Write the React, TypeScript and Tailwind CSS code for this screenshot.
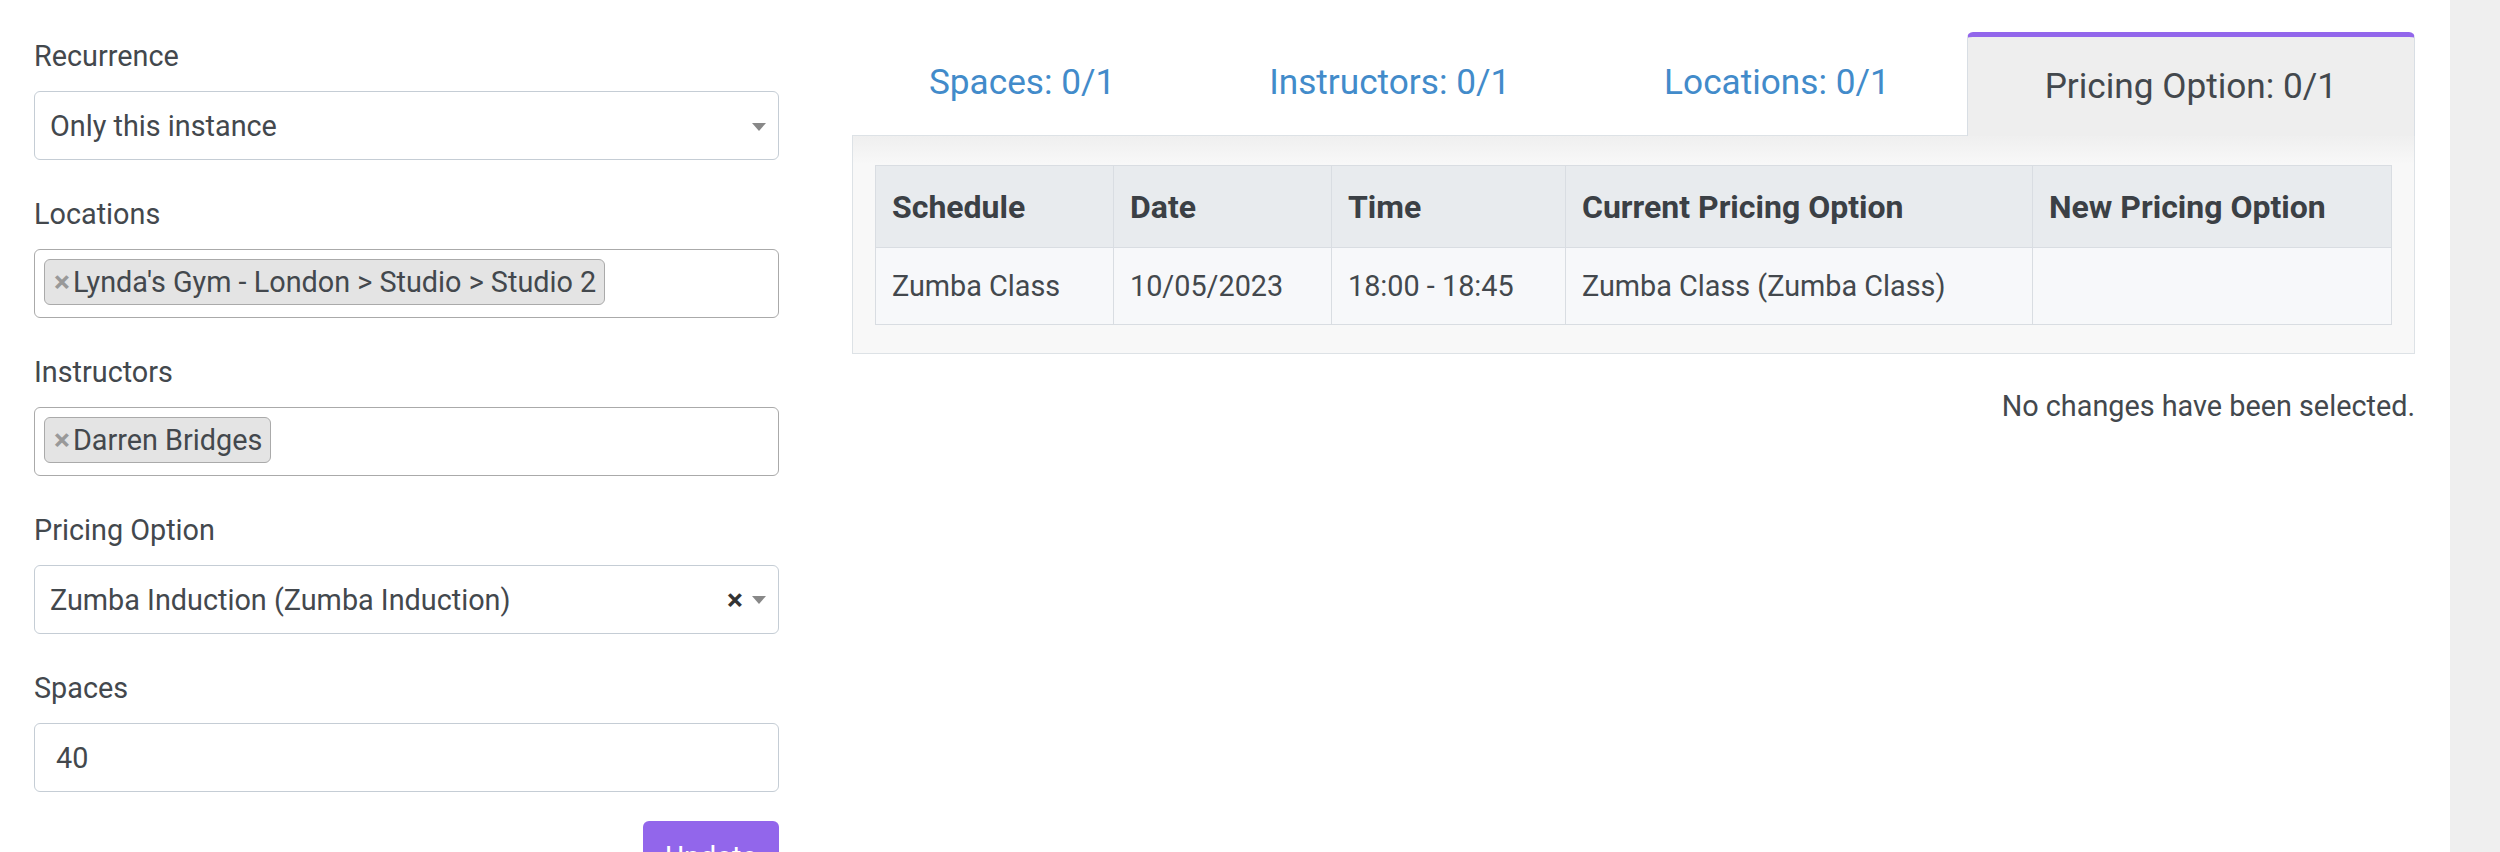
import React from "react";

const Arrow = () => (
  <span className="inline-block w-0 h-0 border-l-[7px] border-r-[7px] border-t-[8px] border-l-transparent border-r-transparent border-t-[#888888]" />
);

function Label({ children }: { children: React.ReactNode }) {
  return <div className="h-[38px] pt-[2px] leading-[38px] text-[28.8px] text-[#43484d]">{children}</div>;
}

function Tag({ children }: { children: React.ReactNode }) {
  return (
    <div className="h-[46px] flex items-center rounded-[6px] border border-[#aaaaaa] bg-[#e4e4e4] pl-[9px] pr-[8px] text-[28.8px] text-[#43484d]">
      <span className="text-[#999999] font-bold text-[30px] mr-[3px] leading-none">×</span>
      <span className="whitespace-nowrap pt-[2px]">{children}</span>
    </div>
  );
}

export default function App() {
  const tabs = ["Spaces: 0/1", "Instructors: 0/1", "Locations: 0/1"];
  const cols = ["Schedule", "Date", "Time", "Current Pricing Option", "New Pricing Option"];
  const row = ["Zumba Class", "10/05/2023", "18:00 - 18:45", "Zumba Class (Zumba Class)", ""];
  return (
    <div className="w-[2500px] h-[852px] overflow-hidden bg-white flex font-['Roboto',sans-serif] text-[#43484d]">
      {/* Left form */}
      <div className="w-[780px] shrink-0 pl-[34px] pr-[1px] pt-[35px] flex flex-col gap-[33px]">
        <div>
          <Label>Recurrence</Label>
          <div className="mt-[18px] h-[69px] rounded-[6px] border border-[#c5cdd5] flex items-center pl-[15px] pr-[12px] pt-[3px] text-[28.8px]">
            <span>Only this instance</span>
            <span className="ml-auto flex items-center"><Arrow /></span>
          </div>
        </div>
        <div>
          <Label>Locations</Label>
          <div className="mt-[18px] h-[69px] rounded-[6px] border border-[#aaaaaa] pt-[9px] pl-[9px] flex items-start">
            <Tag>Lynda's Gym - London &gt; Studio &gt; Studio 2</Tag>
          </div>
        </div>
        <div>
          <Label>Instructors</Label>
          <div className="mt-[18px] h-[69px] rounded-[6px] border border-[#aaaaaa] pt-[9px] pl-[9px] flex items-start">
            <Tag>Darren Bridges</Tag>
          </div>
        </div>
        <div>
          <Label>Pricing Option</Label>
          <div className="mt-[18px] h-[69px] rounded-[6px] border border-[#c5cdd5] flex items-center pl-[15px] pr-[12px] pt-[3px] text-[28.8px]">
            <span>Zumba Induction (Zumba Induction)</span>
            <span className="ml-auto flex items-center gap-[9px] -mt-[3px]">
              <span className="font-bold text-[30px] leading-none text-[#333333]">×</span>
              <Arrow />
            </span>
          </div>
        </div>
        <div>
          <Label>Spaces</Label>
          <div className="mt-[18px] h-[69px] rounded-[6px] border border-[#c5cdd5] flex items-center pl-[21px] pt-[3px] text-[28.8px]">
            <span>40</span>
          </div>
          <div className="flex justify-end mt-[29px]">
            <button className="w-[136px] h-[70px] rounded-[6px] bg-[#9266eb] text-white text-[28.8px] leading-[41px] pt-[16px] flex justify-center items-start">
              Update
            </button>
          </div>
        </div>
      </div>

      {/* Right panel */}
      <div className="ml-[72px] w-[1563px] shrink-0 pt-[32px]">
        <div className="flex h-[104px]">
          {tabs.map((t) => (
            <div
              key={t}
              className="flex-auto h-[104px] border-b border-[#dde2e6] pt-[25px] text-center whitespace-nowrap text-[35.2px] leading-[50px] text-[#428bca]"
            >
              {t}
            </div>
          ))}
          <div className="flex-auto h-[104px] rounded-t-[6px] border-t-[5px] border-t-[#9266eb] border-x border-x-[#d8dee4] bg-[#eeeeee] pt-[24px] text-center whitespace-nowrap text-[35.2px] leading-[50px] text-[#43484d]">
            Pricing Option: 0/1
          </div>
        </div>
        <div className="border-x border-b border-[#dde2e6] bg-[linear-gradient(to_bottom,#efefef,#f8f8f8_28px)] pt-[29px] pb-[28px] px-[22px]">
          <div className="border border-[#d9dde2] grid grid-cols-[238px_218px_234px_467px_1fr] text-[28.8px]">
            {cols.map((c, i) => (
              <div
                key={c}
                className={`h-[82px] bg-[#e8ebee] border-b border-[#d9dde2] flex items-center pl-[16px] font-bold text-[32px] text-[#3b4045] whitespace-nowrap ${i < 4 ? "border-r" : ""}`}
              >
                {c}
              </div>
            ))}
            {row.map((c, i) => (
              <div
                key={i}
                className={`h-[76px] bg-[#f7f8fa] border-[#d9dde2] flex items-center pl-[16px] pt-[2px] whitespace-nowrap ${i < 4 ? "border-r" : ""}`}
              >
                {c}
              </div>
            ))}
          </div>
        </div>
        <div className="mt-[32px] text-right text-[28.8px] leading-[41px]">No changes have been selected.</div>
      </div>

      <div className="flex-1" />
      <div className="w-[50px] h-full bg-[#efefef] shrink-0" />
    </div>
  );
}
